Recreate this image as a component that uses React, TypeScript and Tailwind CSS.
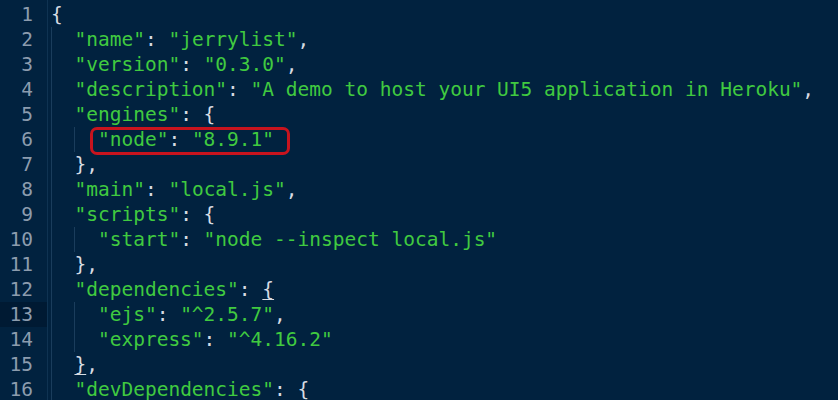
import React from "react";

type Tok = { t: string; c: "s" | "p" | "u" };
const S = (t: string): Tok => ({ t, c: "s" });
const P = (t: string): Tok => ({ t, c: "p" });
const U = (t: string): Tok => ({ t, c: "u" });

const lines: { indent: number; toks: Tok[]; box?: boolean }[] = [
  { indent: 0, toks: [P("{")] },
  { indent: 1, toks: [S('"name"'), P(": "), S('"jerrylist"'), P(",")] },
  { indent: 1, toks: [S('"version"'), P(": "), S('"0.3.0"'), P(",")] },
  { indent: 1, toks: [S('"description"'), P(": "), S('"A demo to host your UI5 application in Heroku"'), P(",")] },
  { indent: 1, toks: [S('"engines"'), P(": {")] },
  { indent: 2, toks: [S('"node"'), P(": "), S('"8.9.1"')], box: true },
  { indent: 1, toks: [P("},")] },
  { indent: 1, toks: [S('"main"'), P(": "), S('"local.js"'), P(",")] },
  { indent: 1, toks: [S('"scripts"'), P(": {")] },
  { indent: 2, toks: [S('"start"'), P(": "), S('"node --inspect local.js"')] },
  { indent: 1, toks: [P("},")] },
  { indent: 1, toks: [S('"dependencies"'), P(": "), U("{")] },
  { indent: 2, toks: [S('"ejs"'), P(": "), S('"^2.5.7"'), P(",")] },
  { indent: 2, toks: [S('"express"'), P(": "), S('"^4.16.2"')] },
  { indent: 1, toks: [U("}"), P(",")] },
  { indent: 1, toks: [S('"devDependencies"'), P(": {")] },
];

export default function App() {
  return (
    <div
      className="w-[838px] h-[400px] overflow-hidden bg-[#01223f] flex"
      style={{ fontFamily: '"DejaVu Sans Mono", "Liberation Mono", monospace' }}
    >
      <div className="w-[48px] shrink-0 pt-[2px] border-r border-[#0f3352] text-[19.5px] leading-[25px] text-[#8c9cae]">
        {lines.map((_, i) => (
          <div
            key={i}
            className={
              "h-[25px] text-right pr-[14px] " + (i === 12 ? "bg-[#001a33]" : "")
            }
          >
            {i + 1}
          </div>
        ))}
      </div>
      <div className="pl-[3px] pt-[2px] text-[19.5px] leading-[25px] whitespace-pre">
        {lines.map((ln, i) => (
          <div key={i} className="h-[25px] flex">
            {Array.from({ length: ln.indent }).map((_, k) => (
              <span
                key={k}
                className="inline-block w-[2ch] h-[25px] border-l border-[#1a3d5c]"
              />
            ))}
            <span className="relative">
              {ln.box && (
                <span className="absolute left-[-8px] right-[-16px] top-[0px] bottom-[-3px] border-[3px] border-[#c8141e] rounded-[7px]" />
              )}
              {ln.toks.map((tk, j) => (
                <span
                  key={j}
                  className={
                    tk.c === "s"
                      ? "text-[#40ca40]"
                      : tk.c === "u"
                      ? "text-[#d6dbe2] underline underline-offset-[3px]"
                      : "text-[#d6dbe2]"
                  }
                >
                  {tk.t}
                </span>
              ))}
            </span>
          </div>
        ))}
      </div>
    </div>
  );
}
